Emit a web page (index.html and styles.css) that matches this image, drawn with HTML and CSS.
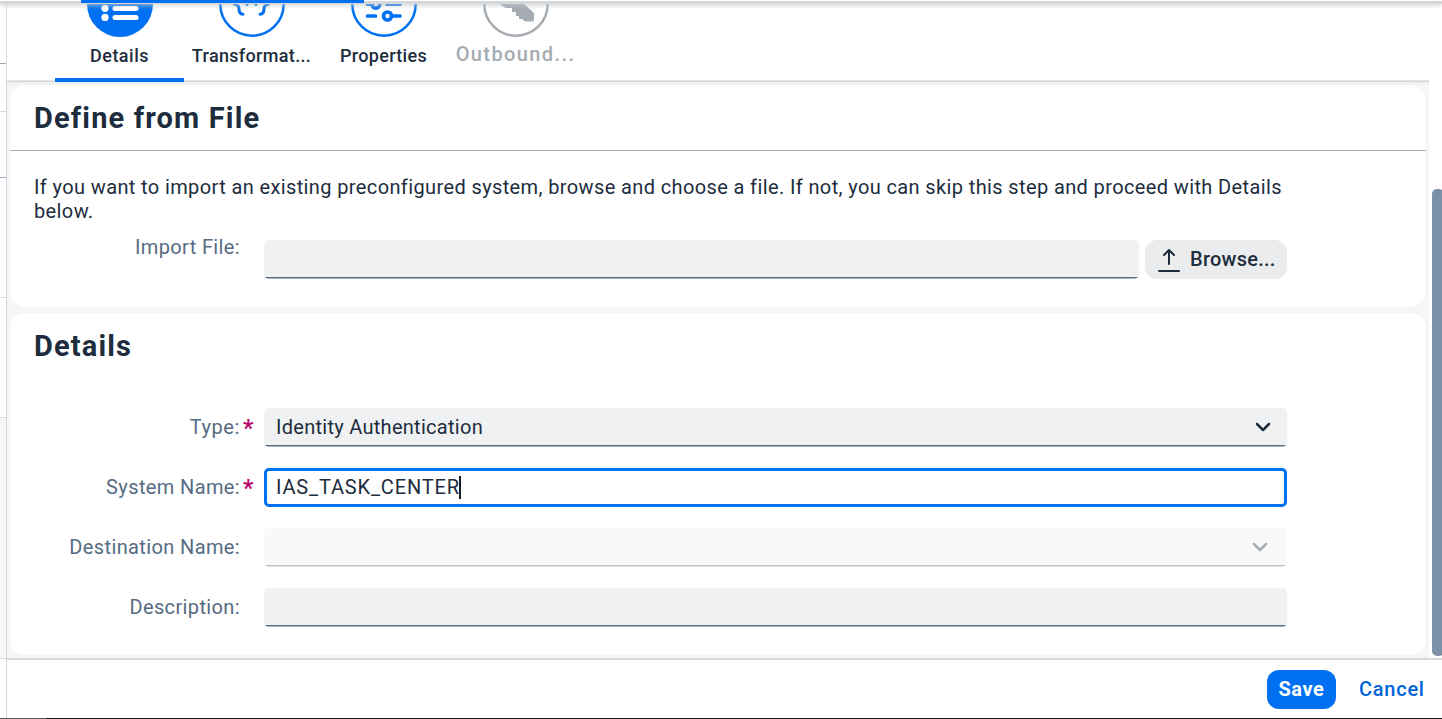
FILE: index.html
```
<!DOCTYPE html>
<html lang="en">
<head>
<meta charset="utf-8">
<title>Identity Provisioning</title>
<link rel="stylesheet" href="styles.css">
</head>
<body>
<div class="app">
  <aside class="master">
    <div class="m-head"></div>
    <div class="m-row r1"></div>
    <div class="m-row r2"></div>
    <div class="m-row r3"></div>
    <div class="m-row r4"></div>
    <div class="m-rest"></div>
    <div class="m-foot"></div>
  </aside>
  <main class="detail">
    <div class="body">
      <div class="content">
        <nav class="tabs">
          <div class="tab active">
            <svg class="ring" viewBox="0 0 66 34"><circle cx="33" cy="1" r="33" fill="#0070f2"/><g fill="#fff"><circle cx="18" cy="5.300" r="3.600"/><circle cx="18" cy="14.400" r="3.600"/><rect x="25.500" y="3" width="26" height="5" rx="2.500"/><rect x="25.500" y="12" width="26" height="5" rx="2.500"/></g></svg>
            <span class="t-label t1">Details</span>
          </div>
          <div class="tab">
            <svg class="ring" viewBox="0 0 66 34" fill="none" stroke="#0070f2" stroke-width="2.500"><circle cx="33" cy="1" r="31.700"/><g stroke-width="3" stroke-linecap="round"><path d="M15.500 1Q20 2 20 6Q20 11 24 11.200M49.500 1Q45 2 45 6Q45 11 41 11.200M28 1.200v.2M37 1.200v.2"/></g></svg>
            <span class="t-label t2">Transformat...</span>
          </div>
          <div class="tab">
            <svg class="ring" viewBox="0 0 66 34" fill="none" stroke="#0070f2" stroke-width="2.500"><circle cx="33" cy="1" r="31.700"/><g stroke-width="3.700" stroke-linecap="round"><path d="M16.500 1.200h5M36 1.200h13M16.500 13h8M42 13h7"/><circle cx="24.800" cy="1.200" r="4"/><circle cx="36.500" cy="13" r="4"/></g></svg>
            <span class="t-label t3">Properties</span>
          </div>
          <div class="tab off">
            <svg class="ring" viewBox="0 0 66 34"><circle cx="33" cy="1" r="31.700" fill="none" stroke="#a5abb3" stroke-width="2.500"/><path fill="#a5abb3" d="M16 0Q21 5 24 5H29V9H33V13H36V16H39L42 18.500H49Q51 18.500 51 16V10L40 0z"/></svg>
            <span class="t-label t4">Outbound...</span>
          </div>
        </nav>
        <section class="card first">
          <h2 class="h1">Define from File</h2>
          <p class="note">If you want to import an existing preconfigured system, browse and choose a file. If not, you can skip this step and proceed with Details<br>below.</p>
          <div class="row import">
            <label>Import File:</label><i></i>
            <div class="field"></div>
            <button class="browse"><svg viewBox="0 0 22 24" width="22" height="24" fill="none" stroke="#1d2d3e" stroke-width="2" stroke-linecap="round" stroke-linejoin="round"><path d="M11 16V2M6 7l5-5 5 5M1 23h20"/></svg><span>Browse...</span></button>
          </div>
        </section>
        <section class="card second">
          <h2>Details</h2>
          <div class="form">
            <div class="row"><label class="l-type">Type:</label><i>*</i><div class="field"><span class="v1">Identity Authentication</span><svg class="chev" viewBox="0 0 16 10"><path d="M2 2l6 6 6-6"/></svg></div></div>
            <div class="row"><label>System Name:</label><i>*</i><div class="field focus"><span class="v2">IAS_TASK_CENTER</span><b class="caret"></b></div></div>
            <div class="row"><label>Destination Name:</label><i></i><div class="field disabled"><svg class="chev" viewBox="0 0 16 10"><path d="M2 2l6 6 6-6"/></svg></div></div>
            <div class="row"><label>Description:</label><i></i><div class="field"></div></div>
          </div>
        </section>
      </div>
      <div class="scroll"><div class="thumb"></div></div>
    </div>
    <footer><button class="save">Save</button><button class="cancel">Cancel</button></footer>
  </main>
  <div class="progress"><div class="bar"></div></div>
</div>
<div class="edge"></div>
</body>
</html>
```
FILE: styles.css
```
*{box-sizing:border-box}
body{margin:0;background:#fff;color:#1d2d3e;font:20px/24px Roboto,sans-serif;overflow:hidden}
h2,p{margin:0}
button{border:0;padding:0;font:inherit}
.app{display:flex;width:1442px;height:718px;position:relative;overflow:hidden}
.edge{height:1px;background:linear-gradient(90deg,#555 46px,#1c1c1c 46px)}
.master{width:7px;border-right:1px solid #d2d5d9;display:flex;flex-direction:column}
.m-head{height:64px;border-bottom:1px solid #9aa5b3}
.m-row{border-bottom:1px solid #d9d9d9}
.r1{height:48px}
.r2{height:66px;border-color:#9aa5b3}
.r3{height:120px}
.r4{height:120px}
.m-rest{flex:1;background:#f5f6f7}
.m-foot{height:60px;border-top:1px solid #d9d9d9}
.detail{flex:1;display:flex;flex-direction:column}
.body{display:flex;height:658px}
.content{width:1422px;background:#f5f6f7}
.tabs{height:82px;background:linear-gradient(#fff 80px,#e3e5e7 80px,#e3e5e7 81px,#d5d8db 81px);padding-left:47px;display:flex;gap:3px;box-shadow:0 2px 2px #eceef0}
.tab{width:129px;height:82px;padding-top:3px;display:flex;flex-direction:column;align-items:center}
.tab.active{margin-left:1px;border-radius:3px 3px 0 0;background:linear-gradient(#0070f2,#0070f2) 0 100%/129px 4px no-repeat}
.ring{width:66px;height:34px;overflow:hidden;display:block}
.t-label{font-size:18px;font-weight:500;line-height:22px;margin-top:8px;white-space:nowrap;letter-spacing:.33px}
.t1{letter-spacing:.5px}
.off .t-label{font-size:20px;color:#a5abb3;margin-top:6px;letter-spacing:1.4px}
.card{margin-left:3px;width:1416px;background:#fff;border-radius:16px}
.first{height:222px;margin-top:3px}
.second{height:342px;margin-top:6px}
h2{font-size:29px;line-height:36px;font-weight:700;padding-left:24px;white-space:nowrap;letter-spacing:1.15px}
.first h2{height:66px;padding-top:15px;border-bottom:1px solid #a6afbb}
.second h2{padding-top:15px}
.note{padding:24px 0 0 24px;white-space:nowrap;letter-spacing:.381px}
.row{display:grid;grid-template-columns:230px 24px 1023px;height:39px;align-items:center}
.row label{text-align:right;color:#556b82;white-space:nowrap;letter-spacing:.37px;padding-bottom:2px}
.row .l-type{letter-spacing:.6px}
.row i{font:700 23px/24px Roboto,sans-serif;color:#ba066c;padding-left:3px;height:22px}
.import{grid-template-columns:230px 24px 875px 142px;margin-top:17px}
.import label{align-self:start;margin-top:-5px}
.import .browse{margin-left:6px}
.form{display:grid;gap:21px;margin-top:44px}
.field{height:39px;border-radius:5px;background:linear-gradient(#eff1f2 37px,#566b82 37px,#566b82 38px,#a9b4c0 38px);padding:0 16px 1px 12px;display:flex;align-items:center}
.field svg{margin-left:auto}
.focus{background:#fff;border:3px solid #0070f2;padding-left:9px}
.disabled{background:linear-gradient(#f9f9f9 37px,#bbc4ce 37px,#bbc4ce 38px,#dde1e6 38px);padding-right:19px}
.v1{letter-spacing:.28px}
.v2{letter-spacing:.85px;margin-right:-1px}
.chev{width:16px;height:10px;fill:none;stroke:#1d2d3e;stroke-width:2.500;stroke-linecap:round;stroke-linejoin:round}
.disabled .chev{stroke:#a5abb3}
.caret{width:2px;height:23px;background:#131e29}
.browse{width:142px;height:39px;border-radius:12px;background:#ebeced;color:#1d2d3e;font-weight:500;display:flex;align-items:center;gap:10px;padding-left:13px;letter-spacing:.25px}
.browse span{padding-bottom:2px}
.scroll{width:13px;background:#fff;padding:189px 0 0 3px}
.thumb{width:12px;height:467px;border-radius:5px;background:#7b91a8}
footer{height:60px;border-top:2px solid #d9d9d9;display:flex;padding:10px 0 0 1260px;gap:23px}
.save{width:69px;height:39px;border-radius:12px;background:#0070f2;color:#fff;font-weight:700;padding-bottom:2px;letter-spacing:.6px}
.cancel{height:39px;background:none;color:#0064d9;font-weight:500;padding-bottom:2px;letter-spacing:.75px}
.progress{position:absolute;left:0;top:0;width:1442px;height:4px;background:linear-gradient(#fff 1px,#d5d8db 1px);box-shadow:0 1px 5px #c5c9cd}
.bar{width:283px;height:3px;margin-left:81px;background:#0070f2}
```
